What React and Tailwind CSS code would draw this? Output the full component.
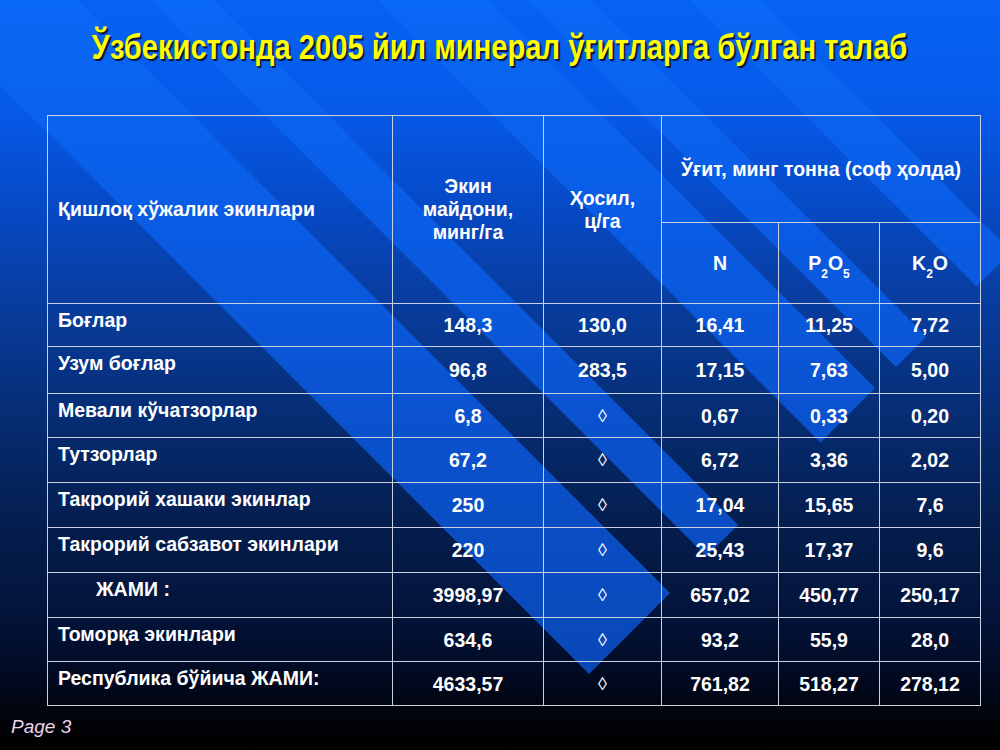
const rows = [
  { name: "Боғлар", v: ["148,3", "130,0", "16,41", "11,25", "7,72"], h: "h-[43px]" },
  { name: "Узум боғлар", v: ["96,8", "283,5", "17,15", "7,63", "5,00"], h: "h-[47px]" },
  { name: "Мевали кўчатзорлар", v: ["6,8", "◊", "0,67", "0,33", "0,20"], h: "h-[44px]" },
  { name: "Тутзорлар", v: ["67,2", "◊", "6,72", "3,36", "2,02"], h: "h-[45px]" },
  { name: "Такрорий хашаки экинлар", v: ["250", "◊", "17,04", "15,65", "7,6"], h: "h-[45px]" },
  { name: "Такрорий сабзавот экинлари", v: ["220", "◊", "25,43", "17,37", "9,6"], h: "h-[45px]" },
  { name: "ЖАМИ :", v: ["3998,97", "◊", "657,02", "450,77", "250,17"], h: "h-[45px]", indent: true },
  { name: "Томорқа экинлари", v: ["634,6", "◊", "93,2", "55,9", "28,0"], h: "h-[44px]" },
  { name: "Республика бўйича ЖАМИ:", v: ["4633,57", "◊", "761,82", "518,27", "278,12"], h: "h-[44px]" },
];

// diagonal ribbons of the slide template: [lower edge, upper edge] as y - x
const bands = [
  [85, -77],
  [-150, -213],
  [-378, -487],
  [-529, -590],
  [-760, -690],
];
const END = 1263;
const START = -300;

function bandPoints([a, b]) {
  const p = (c, s) => `${(s - c) / 2},${(s + c) / 2}`;
  return [p(a, START), p(a, END), p(b, END), p(b, START)].join(" ");
}

function Backdrop() {
  return (
    <svg className="absolute inset-0" width="1000" height="750" viewBox="0 0 1000 750">
      <defs>
        <linearGradient id="band" x1="0" y1="0" x2="0" y2="750" gradientUnits="userSpaceOnUse">
          <stop offset="0" stopColor="#0a69f6" />
          <stop offset="0.3" stopColor="#0a5ee8" />
          <stop offset="0.6" stopColor="#0b55d6" />
          <stop offset="1" stopColor="#0a4cc2" />
        </linearGradient>
      </defs>
      {bands.map((b, i) => (
        <polygon key={i} points={bandPoints(b)} fill="url(#band)" fillOpacity="0.9" />
      ))}
    </svg>
  );
}

const cell = "border border-[#c9d0e2]";

export default function App() {
  return (
    <div className="relative w-[1000px] h-[750px] overflow-hidden bg-[linear-gradient(180deg,#0563f4_0%,#0659e8_15%,#0649c4_28%,#083b9a_42%,#062a6c_58%,#041c4a_72%,#03143a_82%,#020a22_90%,#010308_96%,#000_100%)] font-['Liberation_Sans',Arial,sans-serif]">
      <Backdrop />
      <div className="relative flex flex-col h-full">
        <h1 className="pt-[26px] text-center text-[35px] leading-[42px] font-bold text-[#ffff00] [text-shadow:2px_2px_1px_#0c1238]">
          <span className="inline-block scale-x-[0.833] whitespace-nowrap">
            Ўзбекистонда 2005 йил минерал ўғитларга бўлган талаб
          </span>
        </h1>

        <table className="mt-[47px] ml-[47px] w-[933px] table-fixed border-collapse text-white font-bold text-[19.5px] leading-[23px]">
          <colgroup>
            <col className="w-[345px]" />
            <col className="w-[151px]" />
            <col className="w-[118px]" />
            <col className="w-[117px]" />
            <col className="w-[101px]" />
            <col className="w-[101px]" />
          </colgroup>
          <thead>
            <tr className="h-[107px]">
              <th rowSpan={2} className={`${cell} text-left font-bold pl-[10px] align-middle`}>
                Қишлоқ хўжалик экинлари
              </th>
              <th rowSpan={2} className={`${cell} font-bold align-middle`}>
                Экин
                <br />
                майдони,
                <br />
                минг/га
              </th>
              <th rowSpan={2} className={`${cell} font-bold align-middle`}>
                Ҳосил,
                <br />
                ц/га
              </th>
              <th colSpan={3} className={`${cell} font-bold align-middle`}>
                Ўғит, минг тонна (соф ҳолда)
              </th>
            </tr>
            <tr className="h-[81px]">
              <th className={`${cell} font-bold`}>N</th>
              <th className={`${cell} font-bold`}>
                P<sub className="text-[12px] align-[-5px]">2</sub>O<sub className="text-[12px] align-[-5px]">5</sub>
              </th>
              <th className={`${cell} font-bold`}>
                K<sub className="text-[12px] align-[-5px]">2</sub>O
              </th>
            </tr>
          </thead>
          <tbody>
            {rows.map((r) => (
              <tr key={r.name} className={r.h}>
                <td className={`${cell} align-top pt-[5px] ${r.indent ? "pl-[48px]" : "pl-[10px]"}`}>{r.name}</td>
                {r.v.map((v, i) => (
                  <td
                    key={i}
                    className={`${cell} text-center align-middle pt-[1px] ${v === "◊" ? "font-normal text-[18px]" : ""}`}
                  >
                    {v}
                  </td>
                ))}
              </tr>
            ))}
          </tbody>
        </table>

        <div className="mt-auto pl-[11px] pb-[12px] italic text-[19px] leading-[22px] text-[#ecd3ee]">Page 3</div>
      </div>
    </div>
  );
}
